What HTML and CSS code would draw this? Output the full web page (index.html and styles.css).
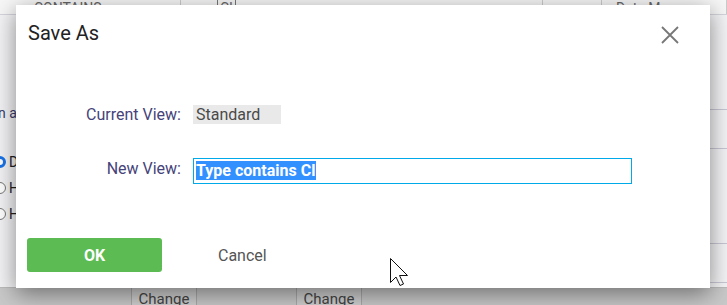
FILE: index.html
```html
<!DOCTYPE html>
<html>
<head>
	<title>Save As</title>
	<link rel="stylesheet" href="styles.css">
</head>
<body>

<div class="page">
	<div class="grid-head">
		<div class="cell c1"><span>CONTAINS</span></div>
		<div class="cell c2"><span class="boxed">CI</span></div>
		<div class="cell c3"></div>
		<div class="cell c4"><span>Date Macro</span></div>
	</div>
	<div class="page-body">
		<div class="side-left">
			<div class="hint">n all</div>
			<div class="radios">
				<label><span class="radio checked"></span>D</label>
				<label><span class="radio"></span>H</label>
				<label><span class="radio"></span>H</label>
			</div>
		</div>
		<div class="side-main"></div>
		<div class="side-right">
			<div class="rline r1"></div>
			<div class="rline r2"></div>
			<div class="rline r3"></div>
			<div class="rline r4"></div>
		</div>
	</div>
	<div class="grid-foot">
		<div class="foot-cell f1"></div>
		<div class="foot-cell f2"><button class="change">Change</button></div>
		<div class="foot-cell f3"></div>
		<div class="foot-cell f4"><button class="change">Change</button></div>
		<div class="foot-cell f5"></div>
	</div>
</div>

<div class="dialog">
	<div class="dialog-header">
		<h2>Save As</h2>
		<span class="close">
			<svg width="18" height="18" viewBox="0 0 18 18">
				<path d="M1 1 L17 17 M17 1 L1 17" stroke="#777" stroke-width="1.8" fill="none"/>
			</svg>
		</span>
	</div>
	<div class="dialog-form">
		<label>Current View:</label>
		<span class="current-view">Standard</span>
		<label class="new-label">New View:</label>
		<div class="text-input"><span class="selected">Type contains Cl</span></div>
	</div>
	<div class="dialog-footer">
		<button class="btn-ok">OK</button>
		<button class="btn-cancel">Cancel</button>
	</div>
	<svg class="cursor" width="19" height="29" viewBox="0 0 19 29">
		<path d="M0.5 0.5 L0.5 24.5 L6 19 L10 27.5 L13.5 26 L9.5 17.5 L17.5 17.5 Z" fill="#fff" stroke="#111" stroke-width="1"/>
	</svg>
</div>

</body>
</html>
```

FILE: styles.css
```css
html, body {
	margin: 0;
	padding: 0;
}
body {
	width: 727px;
	height: 305px;
	overflow: hidden;
	background: #f4f4f6;
	font-family: Roboto, "Liberation Sans", sans-serif;
	position: relative;
}
.page {
	display: flex;
	flex-direction: column;
	height: 305px;
}
.grid-head {
	display: flex;
	height: 14px;
	border-bottom: 1px solid #d4d4dc;
	background: #f7f7f7;
	overflow: hidden;
	color: #666;
	font-size: 14px;
}
.grid-head .cell {
	border-right: 1px solid #ccc;
	box-sizing: border-box;
	line-height: 16px;
}
.grid-head .cell span {
	display: inline-block;
	margin-top: -8px;
}
.c1 { width: 181px; padding-left: 34px; box-sizing: border-box; }
.c2 { width: 362px; padding-left: 36px; }
.c3 { width: 59px; }
.c4 { flex: 1; padding-left: 14px; border-right: none; }
.grid-head .boxed {
	border: 1px solid #777;
	padding: 0 2px;
}
.page-body {
	flex: 1;
	display: flex;
}
.side-left {
	width: 40px;
	padding-top: 90px;
	font-size: 14px;
	color: #3d3a6b;
}
.hint {
	margin-left: -2px;
	line-height: 16px;
}
.radios {
	margin-top: 32px;
	display: flex;
	flex-direction: column;
	gap: 8px;
	color: #222;
}
.radios label {
	display: flex;
	align-items: center;
	gap: 3px;
	height: 18px;
	margin-left: -6px;
}
.radio {
	width: 12px;
	height: 12px;
	border: 1px solid #777;
	border-radius: 50%;
	background: #fff;
	box-sizing: border-box;
}
.radio.checked {
	border: 3px solid #1a73e8;
}
.side-main {
	flex: 1;
}
.side-right {
	width: 20px;
	display: flex;
	flex-direction: column;
}
.rline {
	border-bottom: 1px solid #c8c8d4;
}
.r1 { height: 94px; }
.r2 { height: 38px; }
.r3 { height: 94px; }
.r4 { height: 38px; }
.grid-foot {
	display: flex;
	height: 17px;
	background: #c9c9c9;
	border-top: 1px solid #bbb;
}
.foot-cell {
	height: 17px;
}
.f1 { width: 131px; }
.f2, .f4 { width: 66px; }
.f3 { width: 99px; }
.f5 { flex: 1; }
.change {
	width: 100%;
	height: 17px;
	border: none;
	border-left: 1px solid #aaa;
	border-right: 1px solid #aaa;
	background: #cfcfcf;
	color: #444;
	font-family: Roboto, "Liberation Sans", sans-serif;
	font-size: 15px;
	line-height: 22px;
	padding: 0;
	overflow: hidden;
}

/* dialog */
.dialog {
	position: absolute;
	left: 16px;
	top: 5px;
	width: 694px;
	height: 283px;
	background: #fff;
	box-shadow: 0 6px 22px rgba(0, 0, 0, 0.45);
	box-sizing: border-box;
}
.dialog-header {
	display: flex;
	justify-content: space-between;
	align-items: center;
	padding: 16px 31px 16px 12px;
}
.dialog-header h2 {
	margin: 0;
	font-size: 20px;
	font-weight: 400;
	line-height: 24px;
	color: #222;
}
.close {
	display: flex;
	margin-top: 4px;
}
.dialog-form {
	display: grid;
	grid-template-columns: 165px 439px;
	column-gap: 12px;
	row-gap: 34px;
	align-items: center;
	padding-top: 44px;
	font-size: 16px;
}
.dialog-form label {
	text-align: right;
	color: #46437a;
}
.dialog-form .new-label {
	margin-top: -6px;
}
.current-view {
	width: 88px;
	height: 19px;
	line-height: 19px;
	padding-left: 3px;
	box-sizing: border-box;
	background: #e9e9e9;
	color: #4a4a4a;
}
.text-input {
	height: 26px;
	border: 1px solid #00a9e8;
	box-sizing: border-box;
	padding: 2px 0 0 2px;
}
.selected {
	display: inline-block;
	background: #3390ff;
	color: #fff;
	font-size: 16px;
	font-weight: 700;
	line-height: 19px;
	padding-right: 1px;
}
.dialog-footer {
	display: flex;
	align-items: center;
	padding: 54px 0 0 11px;
}
.btn-ok {
	width: 135px;
	height: 34px;
	border: none;
	border-radius: 3px;
	background: #5cbb52;
	color: #fff;
	font-family: Roboto, "Liberation Sans", sans-serif;
	font-size: 16px;
	font-weight: 700;
}
.btn-cancel {
	border: none;
	background: none;
	margin-left: 56px;
	padding: 0;
	color: #555;
	font-family: Roboto, "Liberation Sans", sans-serif;
	font-size: 16px;
}
.cursor {
	position: absolute;
	left: 374px;
	top: 253px;
}
```
